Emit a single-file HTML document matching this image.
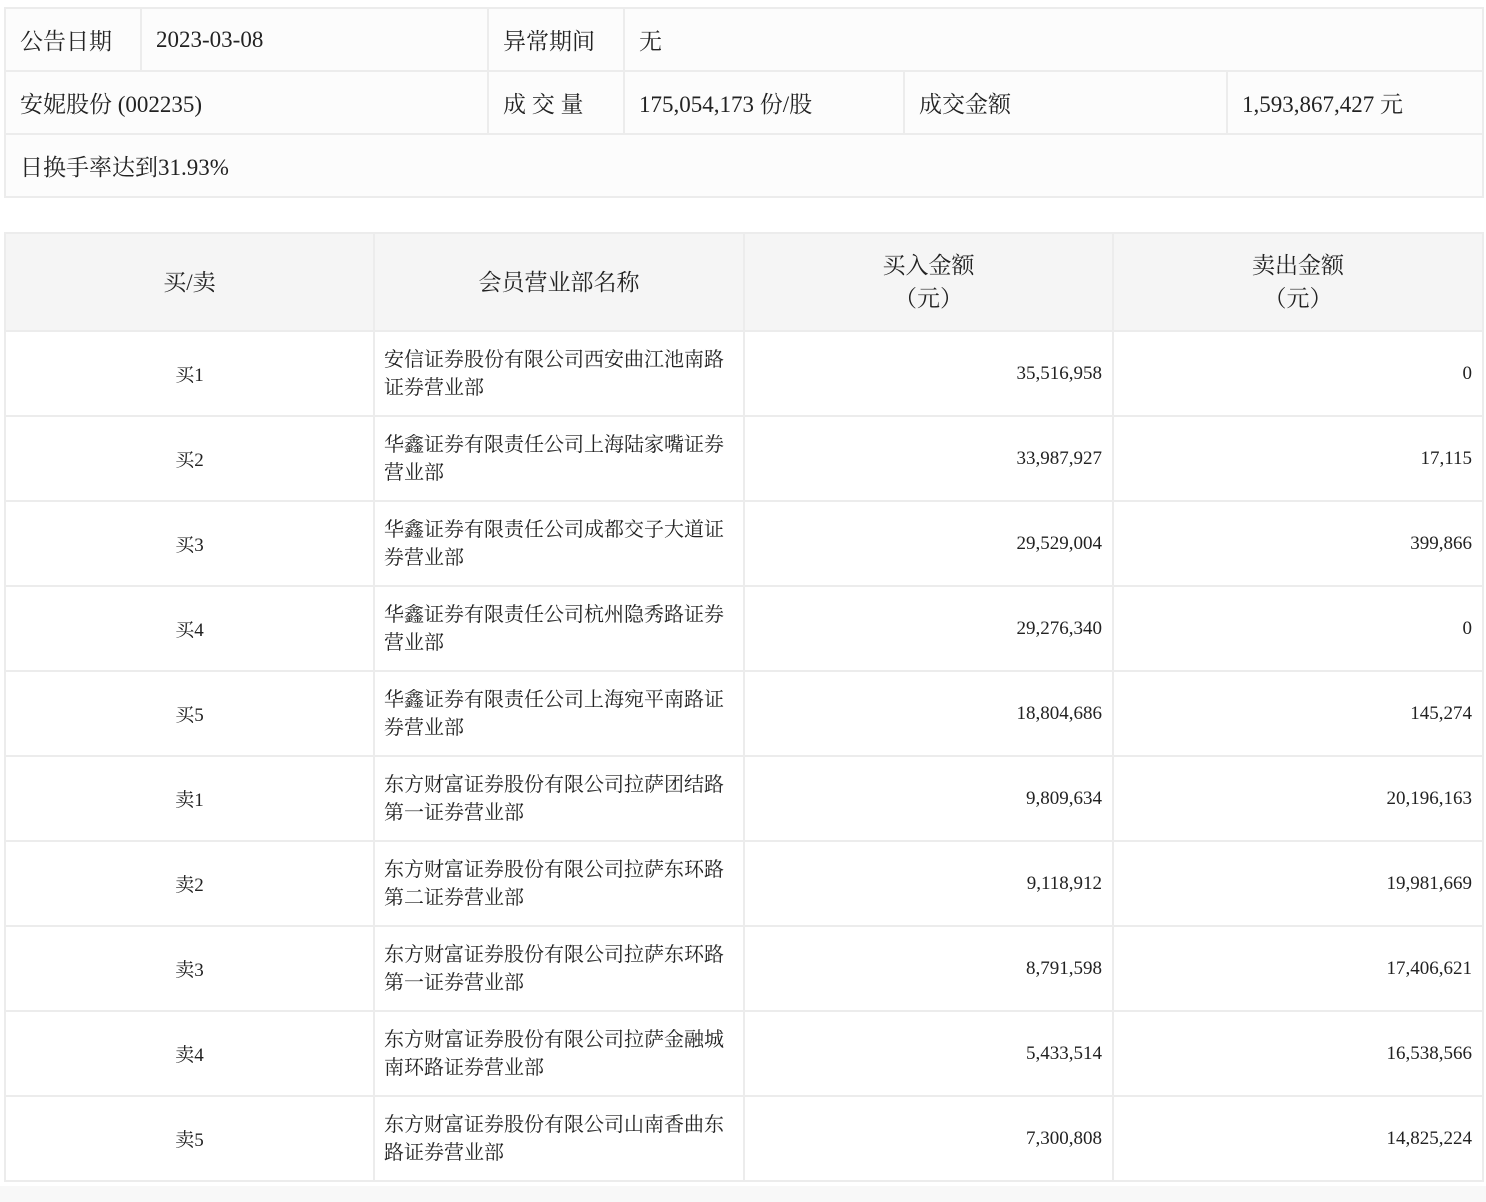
<!DOCTYPE html>
<html><head><meta charset="utf-8"><style>
body{margin:0;background:#fff;width:1486px;height:1202px;position:relative;font-family:"Liberation Serif","Noto Serif CJK SC",serif;color:#222;overflow:hidden}
table{border-collapse:collapse;table-layout:fixed;position:absolute;left:4px;width:1478px}
td{border:2px solid #ececec;padding:0}
#t1{top:7px;background:#fcfcfc;font-size:23px}
#t1 td{height:61px;padding-left:14px}
#t2{top:232px;font-size:19px}
#t2 thead td{background:#f5f5f5;height:96px;text-align:center;font-size:23px;line-height:33px}
#t2 tbody td{height:83px;background:#fff}
.c{text-align:center}.r{text-align:right;padding-right:10px}.n{padding-left:9px;line-height:28px;padding-right:14px;font-size:20px}
#bot{position:absolute;left:0;top:1186px;width:1486px;height:16px;background:#f8f8f8}
</style></head><body>
<table id="t1">
<colgroup><col style="width:136px"><col style="width:347px"><col style="width:136px"><col style="width:280px"><col style="width:323px"><col style="width:256px"></colgroup>
<tr><td>公告日期</td><td>2023-03-08</td><td>异常期间</td><td colspan="3">无</td></tr>
<tr><td colspan="2">安妮股份 (002235)</td><td>成 交 量</td><td>175,054,173 份/股</td><td>成交金额</td><td>1,593,867,427 元</td></tr>
<tr><td colspan="6">日换手率达到31.93%</td></tr>
</table>
<table id="t2">
<colgroup><col style="width:369px"><col style="width:370px"><col style="width:369px"><col style="width:370px"></colgroup>
<thead><tr><td>买/卖</td><td>会员营业部名称</td><td>买入金额<br>（元）</td><td>卖出金额<br>（元）</td></tr></thead>
<tbody>
<tr><td class="c">买1</td><td class="n">安信证券股份有限公司西安曲江池南路证券营业部</td><td class="r">35,516,958</td><td class="r">0</td></tr>
<tr><td class="c">买2</td><td class="n">华鑫证券有限责任公司上海陆家嘴证券营业部</td><td class="r">33,987,927</td><td class="r">17,115</td></tr>
<tr><td class="c">买3</td><td class="n">华鑫证券有限责任公司成都交子大道证券营业部</td><td class="r">29,529,004</td><td class="r">399,866</td></tr>
<tr><td class="c">买4</td><td class="n">华鑫证券有限责任公司杭州隐秀路证券营业部</td><td class="r">29,276,340</td><td class="r">0</td></tr>
<tr><td class="c">买5</td><td class="n">华鑫证券有限责任公司上海宛平南路证券营业部</td><td class="r">18,804,686</td><td class="r">145,274</td></tr>
<tr><td class="c">卖1</td><td class="n">东方财富证券股份有限公司拉萨团结路第一证券营业部</td><td class="r">9,809,634</td><td class="r">20,196,163</td></tr>
<tr><td class="c">卖2</td><td class="n">东方财富证券股份有限公司拉萨东环路第二证券营业部</td><td class="r">9,118,912</td><td class="r">19,981,669</td></tr>
<tr><td class="c">卖3</td><td class="n">东方财富证券股份有限公司拉萨东环路第一证券营业部</td><td class="r">8,791,598</td><td class="r">17,406,621</td></tr>
<tr><td class="c">卖4</td><td class="n">东方财富证券股份有限公司拉萨金融城南环路证券营业部</td><td class="r">5,433,514</td><td class="r">16,538,566</td></tr>
<tr><td class="c">卖5</td><td class="n">东方财富证券股份有限公司山南香曲东路证券营业部</td><td class="r">7,300,808</td><td class="r">14,825,224</td></tr>
</tbody></table>
<div id="bot"></div>
</body></html>
